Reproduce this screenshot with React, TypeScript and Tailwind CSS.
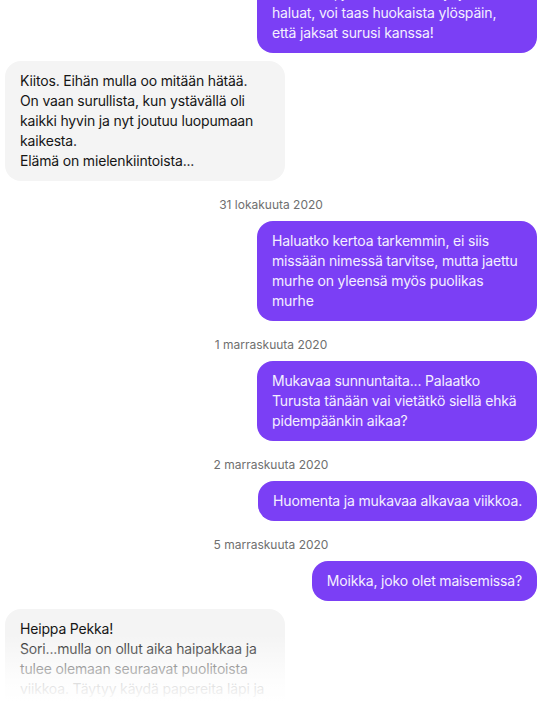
import React from 'react';

type Item =
  | { kind: 'date'; text: string }
  | { kind: 'msg'; mine: boolean; text: string; wide?: boolean };

// Chat history, already scrolled a bit down
const items: Item[] = [
  {
    kind: 'msg',
    mine: true,
    wide: true,
    text: 'Kerro toki, jos siltä tuntuu (ja jos\nhaluat, voi taas huokaista ylöspäin,\nettä jaksat surusi kanssa!',
  },
  {
    kind: 'msg',
    mine: false,
    text: 'Kiitos. Eihän mulla oo mitään hätää.\nOn vaan surullista, kun ystävällä oli kaikki hyvin ja nyt joutuu luopumaan kaikesta.\nElämä on mielenkiintoista...',
  },
  { kind: 'date', text: '31 lokakuuta 2020' },
  {
    kind: 'msg',
    mine: true,
    text: 'Haluatko kertoa tarkemmin, ei siis missään nimessä tarvitse, mutta jaettu murhe on yleensä myös puolikas murhe',
  },
  { kind: 'date', text: '1 marraskuuta 2020' },
  {
    kind: 'msg',
    mine: true,
    text: 'Mukavaa sunnuntaita... Palaatko Turusta tänään vai vietätkö siellä ehkä pidempäänkin aikaa?',
  },
  { kind: 'date', text: '2 marraskuuta 2020' },
  { kind: 'msg', mine: true, text: 'Huomenta ja mukavaa alkavaa viikkoa.' },
  { kind: 'date', text: '5 marraskuuta 2020' },
  { kind: 'msg', mine: true, text: 'Moikka, joko olet maisemissa?' },
  {
    kind: 'msg',
    mine: false,
    text: 'Heippa Pekka!\nSori...mulla on ollut aika haipakkaa ja tulee olemaan seuraavat puolitoista viikkoa. Täytyy käydä papereita läpi ja hoitaa asioita ennen kuin ehdin taas kunnolla vastailla.',
  },
];

const Bubble: React.FC<{ mine: boolean; text: string; wide?: boolean }> = ({ mine, text, wide }) => (
  <div className={`flex ${mine ? 'justify-end' : 'justify-start'}`}>
    <div
      className={`max-w-[280px] rounded-2xl px-[15px] py-2.5 text-[14px] leading-5 tracking-[-0.012em] whitespace-pre-line ${
        wide ? 'w-[280px]' : ''
      } ${mine ? 'bg-[#7b3ff5] text-[#f4efff]' : 'bg-[#f4f4f4] text-[#161616]'}`}
    >
      {text}
    </div>
  </div>
);

export default function App() {
  return (
    <div className="relative h-[714px] w-full overflow-hidden bg-white font-['Inter','Noto_Sans',sans-serif]">
      <div className="-mt-[27px] flex flex-col gap-2 pl-[5px] pr-[14px]">
        {items.map((item, i) =>
          item.kind === 'date' ? (
            <div key={i} className="mt-2 text-center text-xs leading-4 text-[#6f6f6f]">
              {item.text}
            </div>
          ) : (
            <Bubble key={i} mine={item.mine} text={item.text} wide={item.wide} />
          )
        )}
      </div>

      {/* Fade out at the bottom edge */}
      <div className="pointer-events-none absolute inset-x-0 bottom-0 h-[80px] bg-[linear-gradient(to_bottom,rgba(255,255,255,0)_0%,rgba(255,255,255,0.85)_60%,#fff_85%)]" />
    </div>
  );
}
